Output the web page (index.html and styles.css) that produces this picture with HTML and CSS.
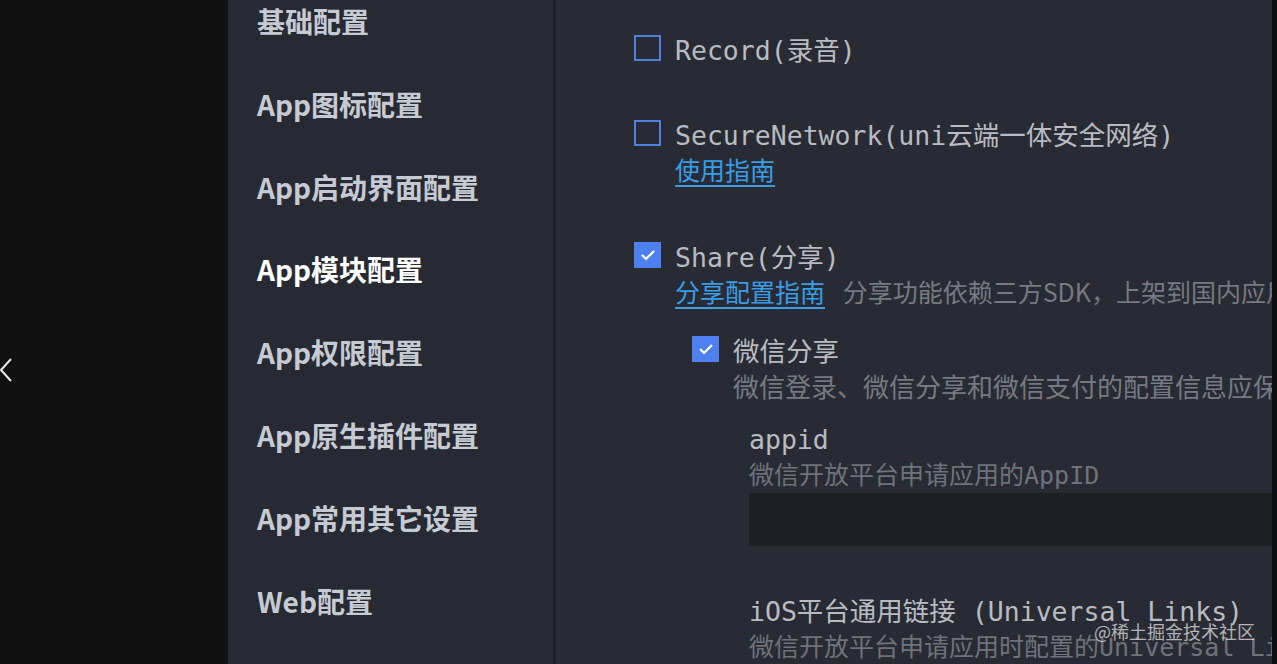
FILE: index.html
```html
<!DOCTYPE html>
<html lang="zh-CN">
<head>
    <meta charset="UTF-8">
    <meta name="viewport" content="width=device-width, initial-scale=1.0">
    <title>manifest.json</title>
    <link rel="stylesheet" href="styles.css">
</head>
<body>
    <div class="page">
        <!-- Dark left gutter with back arrow -->
        <div class="gutter">
            <svg class="back" width="14" height="26" viewBox="0 0 14 26">
                <polyline points="12,2 2,13 12,24" fill="none" stroke="#e8e8e8" stroke-width="2"/>
            </svg>
        </div>

        <!-- Settings menu -->
        <nav class="sidebar">
            <ul class="menu">
                <li>基础配置</li>
                <li>App图标配置</li>
                <li>App启动界面配置</li>
                <li class="active">App模块配置</li>
                <li>App权限配置</li>
                <li>App原生插件配置</li>
                <li>App常用其它设置</li>
                <li>Web配置</li>
            </ul>
        </nav>

        <div class="divider"></div>

        <!-- Module options -->
        <section class="content">
            <div class="option">
                <div class="row">
                    <span class="box"></span>
                    <span class="label">Record(录音)</span>
                </div>
            </div>

            <div class="option">
                <div class="row">
                    <span class="box"></span>
                    <span class="label">SecureNetwork(uni云端一体安全网络)</span>
                </div>
                <div class="note"><a class="link" href="#">使用指南</a></div>
            </div>

            <div class="option">
                <div class="row">
                    <span class="box checked">
                        <svg width="16" height="12" viewBox="0 0 16 12"><polyline points="2,6 6,10 14,2" fill="none" stroke="#fff" stroke-width="2.2"/></svg>
                    </span>
                    <span class="label">Share(分享)</span>
                </div>
                <div class="note">
                    <a class="link" href="#">分享配置指南</a>
                    <span class="hint">分享功能依赖三方SDK，上架到国内应用市场需遵守相关合规要求</span>
                </div>

                <div class="sub">
                    <div class="row">
                        <span class="box checked">
                            <svg width="16" height="12" viewBox="0 0 16 12"><polyline points="2,6 6,10 14,2" fill="none" stroke="#fff" stroke-width="2.2"/></svg>
                        </span>
                        <span class="label">微信分享</span>
                    </div>
                    <div class="note hint">微信登录、微信分享和微信支付的配置信息应保持一致</div>

                    <div class="field">
                        <div class="field-name">appid</div>
                        <div class="field-desc">微信开放平台申请应用的AppID</div>
                        <div class="input"></div>
                    </div>

                    <div class="field">
                        <div class="field-name">iOS平台通用链接 (Universal Links)</div>
                        <div class="field-desc">微信开放平台申请应用时配置的Universal Links</div>
                    </div>
                </div>
            </div>
        </section>

        <div class="edge"></div>

        <div class="watermark">@稀土掘金技术社区</div>
    </div>
</body>
</html>
```

FILE: styles.css
```css
/* Page frame */
body {
    margin: 0;
    background-color: #111111;
    overflow: hidden;
}
.page {
    display: flex;
    height: 664px;
    position: relative;
    overflow: hidden;
}
.gutter {
    width: 228px;
    flex-shrink: 0;
    background-color: #111111;
    padding-top: 357px;
    box-sizing: border-box;
}
.back {
    display: block;
    margin-left: -1px;
}

/* Sidebar menu */
.sidebar {
    width: 325px;
    flex-shrink: 0;
    background-color: #272a33;
    padding-left: 29px;
    box-sizing: border-box;
}
.menu {
    list-style-type: none;
    margin: -20px 0 0 0;
    padding: 0;
}
.menu li {
    height: 82.8px;
    line-height: 82.8px;
    font-family: "Noto Sans CJK SC", sans-serif;
    font-weight: bold;
    font-size: 28px;
    color: #c6cad3;
    white-space: nowrap;
}
.menu li.active {
    color: #ffffff;
}
.divider {
    width: 3px;
    flex-shrink: 0;
    background-color: #1c1f26;
}

/* Content */
.content {
    flex: 1;
    min-width: 0;
    background-color: #282b34;
    padding: 30px 0 0 78px;
    overflow: hidden;
    white-space: nowrap;
}
.edge {
    width: 5px;
    flex-shrink: 0;
    background-color: #0e0f11;
}
.option {
    margin-bottom: 49px;
}
.row {
    display: flex;
    align-items: center;
    height: 36px;
}
.box {
    width: 27px;
    height: 26px;
    box-sizing: border-box;
    border: 2px solid #4f80e0;
    margin-right: 14px;
    flex-shrink: 0;
    display: flex;
    align-items: center;
    justify-content: center;
}
.box.checked {
    background-color: #4f80f0;
    border-color: #4f80f0;
}
.label {
    font-family: "DejaVu Sans Mono", "Noto Sans CJK SC", monospace;
    font-size: 26.5px;
    color: #b8bbc2;
}
.note {
    height: 37px;
    line-height: 37px;
    padding-left: 41px;
    font-family: "Noto Sans CJK SC", sans-serif;
    font-size: 25px;
}
.link {
    color: #3a9de8;
    text-decoration: underline;
    text-underline-offset: 5px;
    margin-right: 12px;
}
.hint {
    color: #767981;
    font-family: "Noto Sans CJK SC", sans-serif;
    font-size: 25px;
}
.sub {
    margin: 21px 0 0 58px;
}
.sub .note {
    font-size: 26px;
}
.field {
    margin: 18px 0 48px 57px;
}
.field-name {
    height: 36px;
    line-height: 36px;
    font-family: "DejaVu Sans Mono", "Noto Sans CJK SC", monospace;
    font-size: 26.5px;
    color: #b8bbc2;
}
.field-desc {
    height: 35px;
    line-height: 35px;
    font-family: "DejaVu Sans Mono", "Noto Sans CJK SC", monospace;
    font-size: 25px;
    color: #6f727a;
}
.input {
    height: 53px;
    background-color: #1e1f24;
}

/* Site watermark */
.watermark {
    position: absolute;
    right: 22px;
    bottom: 20px;
    font-family: "Noto Sans CJK SC", sans-serif;
    font-size: 18px;
    color: rgba(225, 225, 225, 0.75);
}
```
